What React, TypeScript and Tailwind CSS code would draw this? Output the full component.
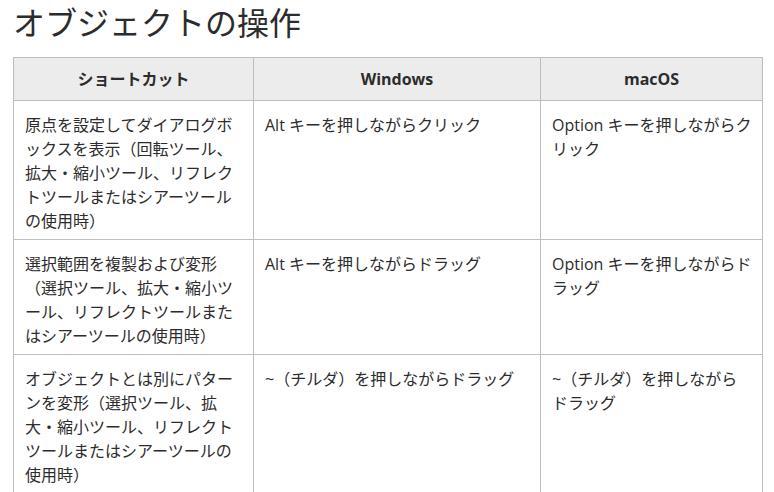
import React from "react";

const rows: [React.ReactNode, React.ReactNode, React.ReactNode][] = [
  [
    "原点を設定してダイアログボックスを表示（回転ツール、拡大・縮小ツール、リフレクトツールまたはシアーツールの使用時）",
    "Alt キーを押しながらクリック",
    "Option キーを押しながらクリック",
  ],
  [
    "選択範囲を複製および変形（選択ツール、拡大・縮小ツール、リフレクトツールまたはシアーツールの使用時）",
    "Alt キーを押しながらドラッグ",
    "Option キーを押しながらドラッグ",
  ],
  [
    "オブジェクトとは別にパターンを変形（選択ツール、拡大・縮小ツール、リフレクトツールまたはシアーツールの使用時）",
    "~（チルダ）を押しながらドラッグ",
    <>
      ~（チルダ）を押しながら
      <br />
      ドラッグ
    </>,
  ],
];

export default function App() {
  return (
    <div
      className="w-[774px] h-[492px] overflow-hidden bg-white pl-[13px] text-[#2c2c2c]"
      style={{ fontFamily: '"Open Sans", "Noto Sans CJK JP", sans-serif' }}
    >
      <h1 className="pt-[3px] h-[57px] text-[32px] leading-[40px] font-normal">
        オブジェクトの操作
      </h1>
      <table className="table-fixed border-collapse w-[749px]">
        <colgroup>
          <col className="w-[240px]" />
          <col className="w-[287px]" />
          <col className="w-[222px]" />
        </colgroup>
        <thead>
          <tr className="bg-[#ececec]">
            {["ショートカット", "Windows", "macOS"].map((h) => (
              <th
                key={h}
                className="border border-[#bdbdbd] h-[43px] text-center text-[16px] font-bold leading-[24px] p-0"
              >
                {h}
              </th>
            ))}
          </tr>
        </thead>
        <tbody>
          {rows.map((r, i) => (
            <tr key={i}>
              {r.map((c, j) => (
                <td
                  key={j}
                  className="border border-[#bdbdbd] align-top text-[16px] leading-[24px] pl-[11px] pr-[8px] pt-[12px] pb-[6px]"
                >
                  {c}
                </td>
              ))}
            </tr>
          ))}
        </tbody>
      </table>
    </div>
  );
}
